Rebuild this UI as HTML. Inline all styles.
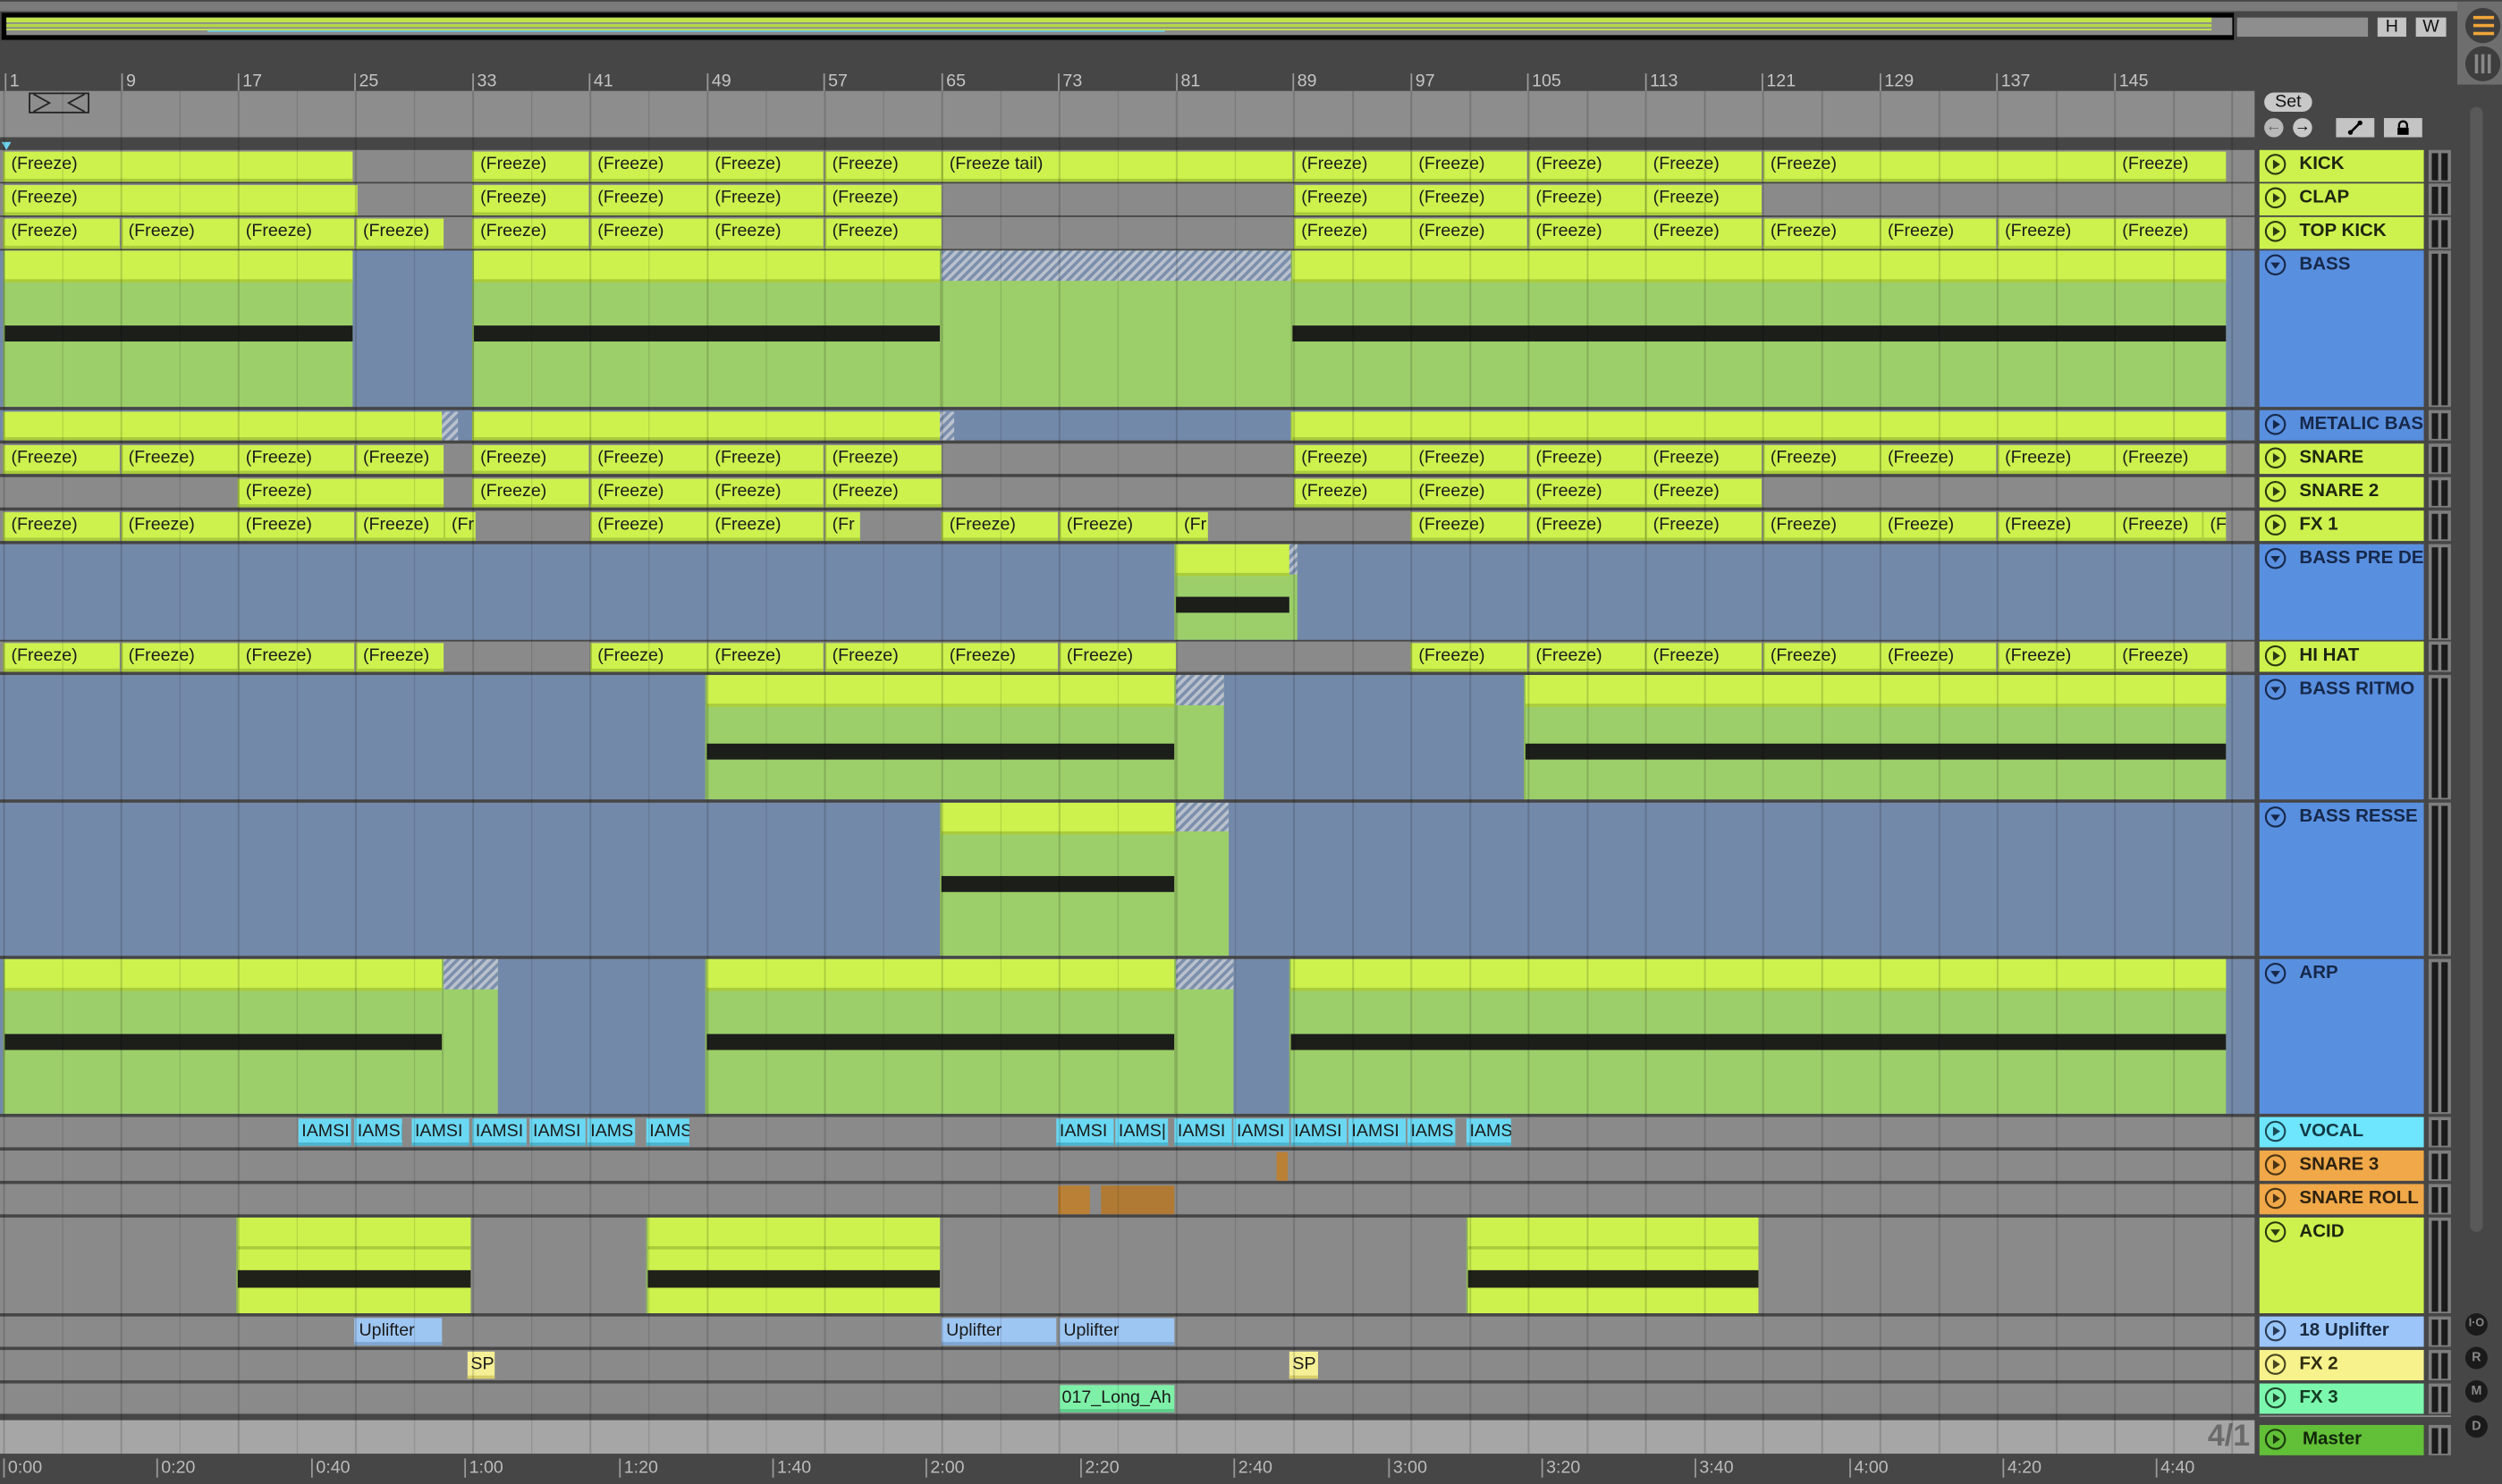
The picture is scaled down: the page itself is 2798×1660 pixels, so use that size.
<!DOCTYPE html>
<html><head><meta charset="utf-8">
<style>
html,body{margin:0;padding:0;background:#464646;overflow:hidden;width:2798px;height:1660px}
#s{position:relative;width:1568px;height:930px;transform:scale(1.78444,1.78495) translateY(1px);transform-origin:0 0;font-family:"Liberation Sans",sans-serif;background:#464646}
i{font-style:normal}
.a{position:absolute}
.r{position:absolute;left:0;width:1413px;overflow:hidden}
.g{background:#8a8a8a}
.b{background:#7389aa}
.f{position:absolute;top:1px;bottom:0;background:#cdf24e;border-bottom:2px solid #a9cc3c;border-left:1px solid #a9cc3c;box-sizing:border-box;font-size:11px;padding-left:4px;line-height:17px;overflow:hidden;white-space:nowrap;color:#1a1a1a}
.bc{position:absolute;top:0;bottom:0;background:#9ccf6a;border-left:1px solid #8ab35a;box-sizing:border-box}
.bc .hd{position:absolute;left:0;right:0;top:0;height:18px;background:#cdf24e;border-bottom:2px solid #a9cc3c}
.bc .nt{position:absolute;left:0;right:0;height:10px;background:#1c1e1a}
.li{background:#cdf24e}
.h{position:absolute;background:repeating-linear-gradient(-45deg,#b9c1cd 0 2px,#7c90ad 2px 4px)}
.v{position:absolute;top:1px;bottom:1px;background:#6ad8f2;border-bottom:2px solid #4ab5cf;font-size:11px;line-height:17px;padding-left:2px;overflow:hidden;white-space:nowrap;color:#1a1a1a;box-sizing:border-box}
.hdr{position:absolute;left:1416px;width:103px;box-sizing:border-box;font-weight:bold;font-size:11.5px;color:#1e2610;padding-left:25px;line-height:19px;white-space:nowrap;overflow:hidden}
.hdr svg{position:absolute;left:3px;top:2px}
.m{position:absolute;left:1522px;width:14px;background:#7e7e7e}
.m:before,.m:after{content:"";position:absolute;top:2px;bottom:1px;width:4px;background:#1a1a1a}
.m:before{left:2px}.m:after{left:8px}
.gl{position:absolute;left:0;top:56px;width:1413px;height:854px;background:repeating-linear-gradient(90deg,rgba(0,0,0,.16) 0 1px,transparent 1px 36.75px);background-position:2px 0;pointer-events:none}
.rn{position:absolute;top:45px;font-size:11px;color:#c4c4c4;border-left:1px solid #999;padding-left:2px;line-height:11px}
.tl{position:absolute;top:913px;font-size:11px;color:#bbb;border-left:1px solid #999;padding-left:2px;line-height:12px}
</style></head><body><div id="s">

<div class="a" style="left:0;top:0;width:1540px;height:6px;background:#7a7a7a"></div>
<div class="a" style="top:7px;left:1px;width:1399px;height:17px;background:#000"></div>
<div class="a" style="left:4px;top:10px;width:1395px;height:11px;background:#8a8a8a"></div>
<div class="a" style="left:4px;top:10px;width:1382px;height:3px;background:#c2e34a"></div>
<div class="a" style="left:4px;top:14px;width:1382px;height:2px;background:#b5d848"></div>
<div class="a" style="left:4px;top:17px;width:1382px;height:1px;background:#c6e84e"></div>
<div class="a" style="left:130px;top:18px;width:600px;height:1px;background:#6fc9e0"></div>
<div class="a" style="left:1402px;top:10px;width:82px;height:12px;background:#8e8e8e"></div>
<div class="a" style="left:1490px;top:10px;width:18px;height:12px;background:#c4c4c4;font-size:11px;text-align:center;line-height:12px;color:#111">H</div>
<div class="a" style="left:1514px;top:10px;width:19px;height:12px;background:#c4c4c4;font-size:11px;text-align:center;line-height:12px;color:#111">W</div>
<div class="a" style="left:1540px;top:0;width:28px;height:100px;background:#6e6e6e;border-radius:0 0 0 6px"></div>
<div class="a" style="left:1545px;top:4px;width:22px;height:22px;border-radius:50%;background:#3e3e3e"></div>
<div class="a" style="left:1550px;top:9px;width:13px;height:2px;background:#f0a63a;box-shadow:0 5px 0 #f0a63a,0 10px 0 #f0a63a"></div>
<div class="a" style="left:1545px;top:28px;width:22px;height:22px;border-radius:50%;background:#3e3e3e"></div>
<div class="a" style="left:1551px;top:33px;width:2px;height:12px;background:#888;box-shadow:4px 0 0 #888,8px 0 0 #888"></div>
<div class="a" style="left:1540px;top:52px;width:28px;height:878px;background:#464646"></div>
<div class="a" style="left:1548px;top:66px;width:8px;height:705px;border-radius:4px;background:#595959"></div>

<div class="rn" style="left:3px">1</div><div class="rn" style="left:76px">9</div><div class="rn" style="left:149px">17</div><div class="rn" style="left:222px">25</div><div class="rn" style="left:296px">33</div><div class="rn" style="left:369px">41</div><div class="rn" style="left:443px">49</div><div class="rn" style="left:516px">57</div><div class="rn" style="left:590px">65</div><div class="rn" style="left:663px">73</div><div class="rn" style="left:737px">81</div><div class="rn" style="left:810px">89</div><div class="rn" style="left:884px">97</div><div class="rn" style="left:957px">105</div><div class="rn" style="left:1031px">113</div><div class="rn" style="left:1104px">121</div><div class="rn" style="left:1178px">129</div><div class="rn" style="left:1251px">137</div><div class="rn" style="left:1325px">145</div>
<div class="a" style="left:0;top:56px;width:1413px;height:29px;background:#8d8d8d"></div>
<div class="a" style="left:18px;top:57px;width:38px;height:13px;border:1px solid #222;box-sizing:border-box;background:#8d8d8d"></div>
<svg class="a" style="left:18px;top:57px" width="38" height="13"><path d="M3 1l10 5.5L3 12M35 1L25 6.5 35 12" fill="none" stroke="#222" stroke-width="1"/></svg>
<div class="a" style="left:1419px;top:57px;width:30px;height:12px;border-radius:6px;background:#c8c8c8;font-size:11px;text-align:center;line-height:12px;color:#111">Set</div>
<div class="a" style="left:1419px;top:73px;width:12px;height:12px;border-radius:50%;background:#b8b8b8;color:#666;font-size:10px;line-height:12px;text-align:center">&#x2190;</div>
<div class="a" style="left:1437px;top:73px;width:12px;height:12px;border-radius:50%;background:#c8c8c8;color:#000;font-size:10px;line-height:12px;text-align:center;font-weight:bold">&#x2192;</div>
<div class="a" style="left:1464px;top:73px;width:24px;height:12px;background:#c4c4c4"></div>
<svg class="a" style="left:1470px;top:74px" width="12" height="10"><path d="M3 8L9 2" stroke="#000" stroke-width="1.5"/><circle cx="3" cy="8" r="1.5"/><circle cx="9" cy="2" r="1.5"/></svg>
<div class="a" style="left:1494px;top:73px;width:24px;height:12px;background:#c4c4c4"></div>
<svg class="a" style="left:1501px;top:74px" width="10" height="10"><path d="M2.5 5V3.5a2.5 2.5 0 0 1 5 0V5" fill="none" stroke="#000" stroke-width="1.3"/><rect x="1.5" y="5" width="7" height="4.5"/></svg>
<div class="a" style="left:1px;top:88px;width:0;height:0;border-left:3px solid transparent;border-right:3px solid transparent;border-top:5px solid #6fd3f0"></div>

<div class="r g" style="top:93px;height:20px">
<i class="f" style="left:2px;width:219px">(Freeze)</i><i class="f" style="left:296px;width:73px">(Freeze)</i><i class="f" style="left:369.5px;width:73px">(Freeze)</i><i class="f" style="left:443px;width:73px">(Freeze)</i><i class="f" style="left:516.5px;width:73px">(Freeze)</i><i class="f" style="left:590px;width:220px">(Freeze tail)</i><i class="f" style="left:810.5px;width:73px">(Freeze)</i><i class="f" style="left:884px;width:73px">(Freeze)</i><i class="f" style="left:957.5px;width:73px">(Freeze)</i><i class="f" style="left:1031px;width:73px">(Freeze)</i><i class="f" style="left:1104.5px;width:220px">(Freeze)</i><i class="f" style="left:1325px;width:70px">(Freeze)</i></div>
<div class="r g" style="top:114px;height:20px">
<i class="f" style="left:2px;width:222px">(Freeze)</i><i class="f" style="left:296px;width:73px">(Freeze)</i><i class="f" style="left:369.5px;width:73px">(Freeze)</i><i class="f" style="left:443px;width:73px">(Freeze)</i><i class="f" style="left:516.5px;width:73px">(Freeze)</i><i class="f" style="left:810.5px;width:73px">(Freeze)</i><i class="f" style="left:884px;width:73px">(Freeze)</i><i class="f" style="left:957.5px;width:73px">(Freeze)</i><i class="f" style="left:1031px;width:73px">(Freeze)</i></div>
<div class="r g" style="top:135px;height:20px">
<i class="f" style="left:2px;width:73px">(Freeze)</i><i class="f" style="left:75.5px;width:73px">(Freeze)</i><i class="f" style="left:149px;width:73px">(Freeze)</i><i class="f" style="left:222.5px;width:55px">(Freeze)</i><i class="f" style="left:296px;width:73px">(Freeze)</i><i class="f" style="left:369.5px;width:73px">(Freeze)</i><i class="f" style="left:443px;width:73px">(Freeze)</i><i class="f" style="left:516.5px;width:73px">(Freeze)</i><i class="f" style="left:810.5px;width:73px">(Freeze)</i><i class="f" style="left:884px;width:73px">(Freeze)</i><i class="f" style="left:957.5px;width:73px">(Freeze)</i><i class="f" style="left:1031px;width:73px">(Freeze)</i><i class="f" style="left:1104.5px;width:73px">(Freeze)</i><i class="f" style="left:1178px;width:73px">(Freeze)</i><i class="f" style="left:1251.5px;width:73px">(Freeze)</i><i class="f" style="left:1325px;width:70px">(Freeze)</i></div>
<div class="r b" style="top:156px;height:98px">
<div class="bc" style="left:2px;width:219px"><div class="hd"></div><div class="nt" style="top:47px"></div></div>
<div class="bc" style="left:296px;width:293px"><div class="hd"></div><div class="nt" style="top:47px"></div></div>
<div class="bc" style="left:589px;width:220px"><div class="h" style="left:0;right:0;top:0;height:19px"></div></div>
<div class="bc" style="left:809px;width:586px"><div class="hd"></div><div class="nt" style="top:47px"></div></div></div>
<div class="r b" style="top:256px;height:19px">
<i class="f" style="left:2px;width:275px"></i><div class="h" style="left:277px;width:10px;top:1px;bottom:0"></div>
<i class="f" style="left:296px;width:293px"></i><div class="h" style="left:589px;width:9px;top:1px;bottom:0"></div>
<i class="f" style="left:809px;width:586px"></i></div>
<div class="r g" style="top:277px;height:19px">
<i class="f" style="left:2px;width:73px">(Freeze)</i><i class="f" style="left:75.5px;width:73px">(Freeze)</i><i class="f" style="left:149px;width:73px">(Freeze)</i><i class="f" style="left:222.5px;width:55px">(Freeze)</i><i class="f" style="left:296px;width:73px">(Freeze)</i><i class="f" style="left:369.5px;width:73px">(Freeze)</i><i class="f" style="left:443px;width:73px">(Freeze)</i><i class="f" style="left:516.5px;width:73px">(Freeze)</i><i class="f" style="left:810.5px;width:73px">(Freeze)</i><i class="f" style="left:884px;width:73px">(Freeze)</i><i class="f" style="left:957.5px;width:73px">(Freeze)</i><i class="f" style="left:1031px;width:73px">(Freeze)</i><i class="f" style="left:1104.5px;width:73px">(Freeze)</i><i class="f" style="left:1178px;width:73px">(Freeze)</i><i class="f" style="left:1251.5px;width:73px">(Freeze)</i><i class="f" style="left:1325px;width:70px">(Freeze)</i></div>
<div class="r g" style="top:298px;height:19px">
<i class="f" style="left:149px;width:129px">(Freeze)</i><i class="f" style="left:296px;width:73px">(Freeze)</i><i class="f" style="left:369.5px;width:73px">(Freeze)</i><i class="f" style="left:443px;width:73px">(Freeze)</i><i class="f" style="left:516.5px;width:73px">(Freeze)</i><i class="f" style="left:810.5px;width:73px">(Freeze)</i><i class="f" style="left:884px;width:73px">(Freeze)</i><i class="f" style="left:957.5px;width:73px">(Freeze)</i><i class="f" style="left:1031px;width:73px">(Freeze)</i></div>
<div class="r g" style="top:319px;height:19px">
<i class="f" style="left:2px;width:73px">(Freeze)</i><i class="f" style="left:75.5px;width:73px">(Freeze)</i><i class="f" style="left:149px;width:73px">(Freeze)</i><i class="f" style="left:222.5px;width:55px">(Freeze)</i><i class="f" style="left:278px;width:20px">(Fr</i><i class="f" style="left:369.5px;width:73px">(Freeze)</i><i class="f" style="left:443px;width:73px">(Freeze)</i><i class="f" style="left:516.5px;width:22px">(Fr</i><i class="f" style="left:590px;width:73px">(Freeze)</i><i class="f" style="left:663.5px;width:73px">(Freeze)</i><i class="f" style="left:737px;width:20px">(Fr</i><i class="f" style="left:884px;width:73px">(Freeze)</i><i class="f" style="left:957.5px;width:73px">(Freeze)</i><i class="f" style="left:1031px;width:73px">(Freeze)</i><i class="f" style="left:1104.5px;width:73px">(Freeze)</i><i class="f" style="left:1178px;width:73px">(Freeze)</i><i class="f" style="left:1251.5px;width:73px">(Freeze)</i><i class="f" style="left:1325px;width:55px">(Freeze)</i><i class="f" style="left:1380px;width:15px">(F</i></div>
<div class="r b" style="top:340px;height:60px">
<div class="bc" style="left:736px;width:77px"><div class="hd" style="right:5px"></div><div class="h" style="right:0;width:5px;top:0;height:19px"></div><div class="nt" style="top:33px;right:5px"></div></div></div>
<div class="r g" style="top:401px;height:19px">
<i class="f" style="left:2px;width:73px">(Freeze)</i><i class="f" style="left:75.5px;width:73px">(Freeze)</i><i class="f" style="left:149px;width:73px">(Freeze)</i><i class="f" style="left:222.5px;width:55px">(Freeze)</i><i class="f" style="left:369.5px;width:73px">(Freeze)</i><i class="f" style="left:443px;width:73px">(Freeze)</i><i class="f" style="left:516.5px;width:73px">(Freeze)</i><i class="f" style="left:590px;width:73px">(Freeze)</i><i class="f" style="left:663.5px;width:73px">(Freeze)</i><i class="f" style="left:884px;width:73px">(Freeze)</i><i class="f" style="left:957.5px;width:73px">(Freeze)</i><i class="f" style="left:1031px;width:73px">(Freeze)</i><i class="f" style="left:1104.5px;width:73px">(Freeze)</i><i class="f" style="left:1178px;width:73px">(Freeze)</i><i class="f" style="left:1251.5px;width:73px">(Freeze)</i><i class="f" style="left:1325px;width:70px">(Freeze)</i></div>
<div class="r b" style="top:422px;height:78px">
<div class="bc" style="left:442px;width:294px"><div class="hd"></div><div class="nt" style="top:43px"></div></div>
<div class="bc" style="left:736px;width:31px"><div class="h" style="left:0;right:0;top:0;height:19px"></div></div>
<div class="bc" style="left:955px;width:440px"><div class="hd"></div><div class="nt" style="top:43px"></div></div></div>
<div class="r b" style="top:502px;height:96px">
<div class="bc" style="left:589px;width:147px"><div class="hd"></div><div class="nt" style="top:46px"></div></div>
<div class="bc" style="left:736px;width:34px"><div class="h" style="left:0;right:0;top:0;height:18px"></div></div></div>
<div class="r b" style="top:600px;height:97px">
<div class="bc" style="left:2px;width:275px"><div class="hd"></div><div class="nt" style="top:47px"></div></div>
<div class="bc" style="left:277px;width:35px"><div class="h" style="left:0;right:0;top:0;height:19px"></div></div>
<div class="bc" style="left:442px;width:294px"><div class="hd"></div><div class="nt" style="top:47px"></div></div>
<div class="bc" style="left:736px;width:37px"><div class="h" style="left:0;right:0;top:0;height:19px"></div></div>
<div class="bc" style="left:808px;width:587px"><div class="hd"></div><div class="nt" style="top:47px"></div></div></div>
<div class="r g" style="top:699px;height:19px">
<i class="v" style="left:187px;width:33px">IAMSI</i><i class="v" style="left:222px;width:30px">IAMS|</i><i class="v" style="left:258px;width:36px">IAMSI</i><i class="v" style="left:296px;width:34px">IAMSI</i><i class="v" style="left:332px;width:35px">IAMSI</i><i class="v" style="left:368px;width:30px">IAMS</i><i class="v" style="left:405px;width:27px">IAMS</i><i class="v" style="left:662px;width:36px">IAMSI</i><i class="v" style="left:699px;width:33px">IAMS|</i><i class="v" style="left:736px;width:36px">IAMSI</i><i class="v" style="left:773px;width:35px">IAMSI</i><i class="v" style="left:809px;width:35px">IAMSI</i><i class="v" style="left:845px;width:36px">IAMSI</i><i class="v" style="left:882px;width:30px">IAMS</i><i class="v" style="left:919px;width:28px">IAMS</i></div>
<div class="r g" style="top:720px;height:19px"><div class="a" style="left:800px;width:7px;top:1px;bottom:0;background:#b98036"></div></div>
<div class="r g" style="top:741px;height:19px"><div class="a" style="left:663px;width:20px;top:1px;bottom:0;background:#b98036"></div><div class="a" style="left:690px;width:46px;top:1px;bottom:0;background:#b07a34"></div></div>
<div class="r g" style="top:762px;height:60px">
<div class="bc li" style="left:148px;width:147px"><div class="hd"></div><div class="nt" style="top:33px;height:11px;background:#20221a"></div></div>
<div class="bc li" style="left:405px;width:184px"><div class="hd"></div><div class="nt" style="top:33px;height:11px;background:#20221a"></div></div>
<div class="bc li" style="left:919px;width:183px"><div class="hd"></div><div class="nt" style="top:33px;height:11px;background:#20221a"></div></div></div>
<div class="r g" style="top:824px;height:19px">
<i class="v" style="left:222px;width:55px;background:#9ec6f2;border-color:#7fa6d4;padding-left:3px">Uplifter</i><i class="v" style="left:590px;width:72px;background:#9ec6f2;border-color:#7fa6d4;padding-left:3px">Uplifter</i><i class="v" style="left:663.5px;width:72px;background:#9ec6f2;border-color:#7fa6d4;padding-left:3px">Uplifter</i></div>
<div class="r g" style="top:845px;height:19px">
<i class="v" style="left:293px;width:17px;background:#f5ef96;border-color:#d8cf6a">SP</i><i class="v" style="left:808px;width:18px;background:#f5ef96;border-color:#d8cf6a">SP</i></div>
<div class="r g" style="top:866px;height:19px">
<i class="v" style="left:663.5px;width:72px;background:#7ef0a8;border-color:#5ccd88">017_Long_Ah</i></div>
<div class="r" style="top:889px;height:21px;background:#a6a6a6"></div>
<div class="a" style="left:1360px;top:889px;width:50px;height:21px;font-size:19px;font-weight:bold;color:#6a6a6a;text-align:right;line-height:22px">4/1</div>

<div class="gl"></div>
<div class="a" style="left:1413px;top:56px;width:3px;height:854px;background:#464646"></div>

<div class="tl" style="left:2px">0:00</div><div class="tl" style="left:98px">0:20</div><div class="tl" style="left:195px">0:40</div><div class="tl" style="left:291px">1:00</div><div class="tl" style="left:388px">1:20</div><div class="tl" style="left:484px">1:40</div><div class="tl" style="left:580px">2:00</div><div class="tl" style="left:677px">2:20</div><div class="tl" style="left:773px">2:40</div><div class="tl" style="left:870px">3:00</div><div class="tl" style="left:966px">3:20</div><div class="tl" style="left:1062px">3:40</div><div class="tl" style="left:1159px">4:00</div><div class="tl" style="left:1255px">4:20</div><div class="tl" style="left:1351px">4:40</div>

<div class="hdr" style="top:93px;height:20px;background:#cdf24e"><svg width="14" height="14"><circle cx="7" cy="7" r="6" fill="none" stroke="#2c3a10" stroke-width="1.2"/><path d="M5.5 4v6l4.5-3z" fill="#2c3a10"/></svg>KICK</div>
<div class="hdr" style="top:114px;height:20px;background:#cdf24e"><svg width="14" height="14"><circle cx="7" cy="7" r="6" fill="none" stroke="#2c3a10" stroke-width="1.2"/><path d="M5.5 4v6l4.5-3z" fill="#2c3a10"/></svg>CLAP</div>
<div class="hdr" style="top:135px;height:20px;background:#cdf24e"><svg width="14" height="14"><circle cx="7" cy="7" r="6" fill="none" stroke="#2c3a10" stroke-width="1.2"/><path d="M5.5 4v6l4.5-3z" fill="#2c3a10"/></svg>TOP KICK</div>
<div class="hdr" style="top:156px;height:98px;background:#598fdf;color:#16284a"><svg width="14" height="14"><circle cx="7" cy="7" r="6" fill="none" stroke="#16284a" stroke-width="1.2"/><path d="M4 5.5h6l-3 4z" fill="#16284a"/></svg>BASS</div>
<div class="hdr" style="top:256px;height:19px;background:#598fdf;color:#16284a"><svg width="14" height="14"><circle cx="7" cy="7" r="6" fill="none" stroke="#16284a" stroke-width="1.2"/><path d="M5.5 4v6l4.5-3z" fill="#16284a"/></svg>METALIC BAS</div>
<div class="hdr" style="top:277px;height:19px;background:#cdf24e"><svg width="14" height="14"><circle cx="7" cy="7" r="6" fill="none" stroke="#2c3a10" stroke-width="1.2"/><path d="M5.5 4v6l4.5-3z" fill="#2c3a10"/></svg>SNARE</div>
<div class="hdr" style="top:298px;height:19px;background:#cdf24e"><svg width="14" height="14"><circle cx="7" cy="7" r="6" fill="none" stroke="#2c3a10" stroke-width="1.2"/><path d="M5.5 4v6l4.5-3z" fill="#2c3a10"/></svg>SNARE 2</div>
<div class="hdr" style="top:319px;height:19px;background:#cdf24e"><svg width="14" height="14"><circle cx="7" cy="7" r="6" fill="none" stroke="#2c3a10" stroke-width="1.2"/><path d="M5.5 4v6l4.5-3z" fill="#2c3a10"/></svg>FX 1</div>
<div class="hdr" style="top:340px;height:60px;background:#598fdf;color:#16284a"><svg width="14" height="14"><circle cx="7" cy="7" r="6" fill="none" stroke="#16284a" stroke-width="1.2"/><path d="M4 5.5h6l-3 4z" fill="#16284a"/></svg>BASS PRE DE</div>
<div class="hdr" style="top:401px;height:19px;background:#cdf24e"><svg width="14" height="14"><circle cx="7" cy="7" r="6" fill="none" stroke="#2c3a10" stroke-width="1.2"/><path d="M5.5 4v6l4.5-3z" fill="#2c3a10"/></svg>HI HAT</div>
<div class="hdr" style="top:422px;height:78px;background:#598fdf;color:#16284a"><svg width="14" height="14"><circle cx="7" cy="7" r="6" fill="none" stroke="#16284a" stroke-width="1.2"/><path d="M4 5.5h6l-3 4z" fill="#16284a"/></svg>BASS RITMO</div>
<div class="hdr" style="top:502px;height:96px;background:#598fdf;color:#16284a"><svg width="14" height="14"><circle cx="7" cy="7" r="6" fill="none" stroke="#16284a" stroke-width="1.2"/><path d="M4 5.5h6l-3 4z" fill="#16284a"/></svg>BASS RESSE</div>
<div class="hdr" style="top:600px;height:97px;background:#598fdf;color:#16284a"><svg width="14" height="14"><circle cx="7" cy="7" r="6" fill="none" stroke="#16284a" stroke-width="1.2"/><path d="M4 5.5h6l-3 4z" fill="#16284a"/></svg>ARP</div>
<div class="hdr" style="top:699px;height:19px;background:#6ee6fd;color:#123a46"><svg width="14" height="14"><circle cx="7" cy="7" r="6" fill="none" stroke="#1c4a56" stroke-width="1.2"/><path d="M5.5 4v6l4.5-3z" fill="#1c4a56"/></svg>VOCAL</div>
<div class="hdr" style="top:720px;height:19px;background:#f0a848;color:#2e2210"><svg width="14" height="14"><circle cx="7" cy="7" r="6" fill="none" stroke="#4a3414" stroke-width="1.2"/><path d="M5.5 4v6l4.5-3z" fill="#4a3414"/></svg>SNARE 3</div>
<div class="hdr" style="top:741px;height:19px;background:#f0a848;color:#2e2210"><svg width="14" height="14"><circle cx="7" cy="7" r="6" fill="none" stroke="#4a3414" stroke-width="1.2"/><path d="M5.5 4v6l4.5-3z" fill="#4a3414"/></svg>SNARE ROLL</div>
<div class="hdr" style="top:762px;height:60px;background:#cdf24e"><svg width="14" height="14"><circle cx="7" cy="7" r="6" fill="none" stroke="#2c3a10" stroke-width="1.2"/><path d="M4 5.5h6l-3 4z" fill="#2c3a10"/></svg>ACID</div>
<div class="hdr" style="top:824px;height:19px;background:#9cc6fa;color:#1a2a40"><svg width="14" height="14"><circle cx="7" cy="7" r="6" fill="none" stroke="#2a3a55" stroke-width="1.2"/><path d="M5.5 4v6l4.5-3z" fill="#2a3a55"/></svg>18 Uplifter</div>
<div class="hdr" style="top:845px;height:19px;background:#f7f28c;color:#2e2c10"><svg width="14" height="14"><circle cx="7" cy="7" r="6" fill="none" stroke="#4a4620" stroke-width="1.2"/><path d="M5.5 4v6l4.5-3z" fill="#4a4620"/></svg>FX 2</div>
<div class="hdr" style="top:866px;height:19px;background:#7cf8ae;color:#133a22"><svg width="14" height="14"><circle cx="7" cy="7" r="6" fill="none" stroke="#1f4a30" stroke-width="1.2"/><path d="M5.5 4v6l4.5-3z" fill="#1f4a30"/></svg>FX 3</div>
<div class="a" style="left:1416px;top:886px;width:120px;height:1px;background:#8a8a8a"></div>
<div class="hdr" style="top:892px;height:19px;background:#62bf38;color:#12260a;padding-left:27px"><svg width="14" height="14"><circle cx="7" cy="7" r="6" fill="none" stroke="#1a3a0c" stroke-width="1.2"/><path d="M5.5 4v6l4.5-3z" fill="#1a3a0c"/></svg>Master</div>

<div class="m" style="top:93px;height:20px"></div><div class="m" style="top:114px;height:20px"></div><div class="m" style="top:135px;height:20px"></div><div class="m" style="top:156px;height:98px"></div><div class="m" style="top:256px;height:19px"></div><div class="m" style="top:277px;height:19px"></div><div class="m" style="top:298px;height:19px"></div><div class="m" style="top:319px;height:19px"></div><div class="m" style="top:340px;height:60px"></div><div class="m" style="top:401px;height:19px"></div><div class="m" style="top:422px;height:78px"></div><div class="m" style="top:502px;height:96px"></div><div class="m" style="top:600px;height:97px"></div><div class="m" style="top:699px;height:19px"></div><div class="m" style="top:720px;height:19px"></div><div class="m" style="top:741px;height:19px"></div><div class="m" style="top:762px;height:60px"></div><div class="m" style="top:824px;height:19px"></div><div class="m" style="top:845px;height:19px"></div><div class="m" style="top:866px;height:19px"></div><div class="m" style="top:892px;height:19px"></div>

<div class="a" style="left:1545px;top:822px;width:14px;height:14px;border-radius:50%;background:#1a1a1a;color:#888;font-size:7px;font-weight:bold;text-align:center;line-height:14px">I·O</div>
<div class="a" style="left:1545px;top:843px;width:14px;height:14px;border-radius:50%;background:#1a1a1a;color:#888;font-size:8px;font-weight:bold;text-align:center;line-height:14px">R</div>
<div class="a" style="left:1545px;top:864px;width:14px;height:14px;border-radius:50%;background:#1a1a1a;color:#888;font-size:8px;font-weight:bold;text-align:center;line-height:14px">M</div>
<div class="a" style="left:1545px;top:886px;width:14px;height:14px;border-radius:50%;background:#1a1a1a;color:#888;font-size:8px;font-weight:bold;text-align:center;line-height:14px">D</div>
</div></body></html>
